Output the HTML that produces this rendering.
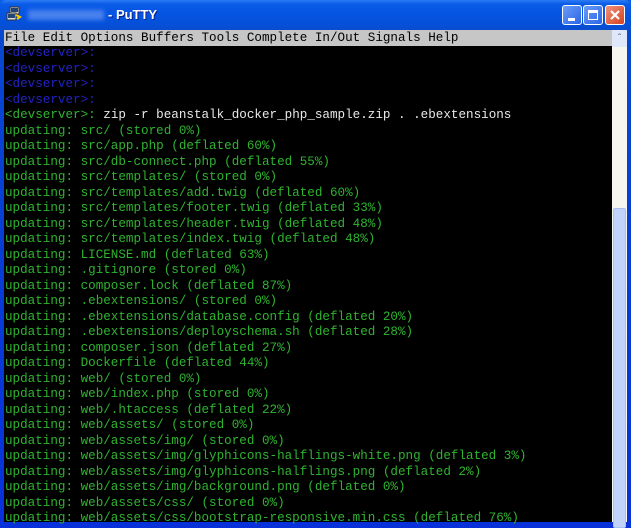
<!DOCTYPE html>
<html><head><meta charset="utf-8"><style>
html,body{margin:0;padding:0;width:631px;height:522px;overflow:hidden;background:#0831d9;}
.win{position:absolute;left:0;top:0;width:631px;height:522px;background:linear-gradient(#0a5fe8,#0553d8 20px,#0847d0 30px,#0831d9);}
.title{position:absolute;left:0;top:0;width:631px;height:30px;background:linear-gradient(#2d7cf5 0,#0a5ce6 4px,#0655e4 12px,#0450d8 24px,#0a4ccf 30px);border-radius:6px 6px 0 0;}
.ttext{position:absolute;left:108px;top:7px;color:#fff;font:bold 13px "Liberation Sans",sans-serif;text-shadow:1px 1px #0a1e8c;}
.blur{position:absolute;left:28px;top:10px;width:76px;height:10px;background:#5a8df0;filter:blur(2px);opacity:.8}
.icon{position:absolute;left:6px;top:6px;width:16px;height:16px;}
.btn{position:absolute;top:5px;width:20px;height:20px;border:1px solid #fff;border-radius:3px;background:linear-gradient(135deg,#6b9cf8,#2a66e6);box-sizing:border-box;}
.close{background:linear-gradient(135deg,#f0937a,#d6421f);}
.menu{position:absolute;left:4px;top:30px;width:608px;height:16px;background:#c6c6c6;font:12.6px "Liberation Mono",monospace;line-height:16px;color:#000;padding-left:1px;box-sizing:border-box;}
.term{position:absolute;left:4px;top:46px;width:608px;height:476px;background:#000;}
.sb{position:absolute;left:612px;top:30px;width:15px;height:492px;background:#f6f5ef;}
.thumb{position:absolute;left:1px;top:178px;width:13px;height:320px;background:#c2d3fb;border:1px solid #aabef2;box-sizing:border-box;border-radius:2px;}
.up{position:absolute;left:0;top:0;width:15px;height:17px;background:#dfe7fb;color:#4d6185;font:10px sans-serif;text-align:center;line-height:17px;}
pre{margin:0;position:absolute;left:1px;top:0px;font:12.6px "Liberation Mono",monospace;line-height:15.5px;color:#2fb42f;}
.b{color:#2222c4}.p{color:#2fb42f}.w{color:#e8e8e8}
</style></head><body>
<div class="win">
<div class="title">
<svg class="icon" viewBox="0 0 16 16"><rect x="4" y="1" width="9" height="7" fill="#ddd" stroke="#333"/><rect x="5" y="2" width="7" height="4" fill="#247"/><rect x="1" y="7" width="9" height="7" fill="#ddd" stroke="#333"/><rect x="2" y="8" width="7" height="4" fill="#247"/><path d="M10 9 L14 11 L11 13" stroke="#fc0" stroke-width="2" fill="none"/></svg>
<div class="blur"></div>
<div class="ttext">- PuTTY</div>
<div class="btn" style="left:562px"><div style="position:absolute;left:5px;top:12px;width:7px;height:3px;background:#fff"></div></div>
<div class="btn" style="left:583px"><div style="position:absolute;left:4px;top:4px;width:10px;height:10px;border:1px solid #fff;border-top-width:3px;box-sizing:border-box"></div></div>
<div class="btn close" style="left:605px"><svg width="18" height="18" viewBox="0 0 18 18" style="position:absolute;left:0;top:0"><path d="M5 5 L13 13 M13 5 L5 13" stroke="#fff" stroke-width="2.2"/></svg></div>
</div>
<div class="menu">File Edit Options Buffers Tools Complete In/Out Signals Help</div>
<div class="term"><pre><span class="b">&lt;devserver&gt;:</span>
<span class="b">&lt;devserver&gt;:</span>
<span class="b">&lt;devserver&gt;:</span>
<span class="b">&lt;devserver&gt;:</span>
<span class="p">&lt;devserver&gt;:</span><span class="w"> zip -r beanstalk_docker_php_sample.zip . .ebextensions</span>
updating: src/ (stored 0%)
updating: src/app.php (deflated 60%)
updating: src/db-connect.php (deflated 55%)
updating: src/templates/ (stored 0%)
updating: src/templates/add.twig (deflated 60%)
updating: src/templates/footer.twig (deflated 33%)
updating: src/templates/header.twig (deflated 48%)
updating: src/templates/index.twig (deflated 48%)
updating: LICENSE.md (deflated 63%)
updating: .gitignore (stored 0%)
updating: composer.lock (deflated 87%)
updating: .ebextensions/ (stored 0%)
updating: .ebextensions/database.config (deflated 20%)
updating: .ebextensions/deployschema.sh (deflated 28%)
updating: composer.json (deflated 27%)
updating: Dockerfile (deflated 44%)
updating: web/ (stored 0%)
updating: web/index.php (stored 0%)
updating: web/.htaccess (deflated 22%)
updating: web/assets/ (stored 0%)
updating: web/assets/img/ (stored 0%)
updating: web/assets/img/glyphicons-halflings-white.png (deflated 3%)
updating: web/assets/img/glyphicons-halflings.png (deflated 2%)
updating: web/assets/img/background.png (deflated 0%)
updating: web/assets/css/ (stored 0%)
updating: web/assets/css/bootstrap-responsive.min.css (deflated 76%)</pre></div>
<div class="sb"><div class="up">&#710;</div><div class="thumb"></div></div>
</div>
</body></html>
